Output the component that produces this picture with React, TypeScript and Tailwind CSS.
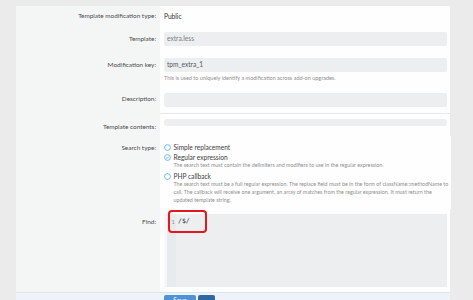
import type { ReactNode } from 'react'

// Admin form: edit template modification (regex search type)

const font = { fontFamily: 'Lato, "Noto Sans", sans-serif' }

function Row({
  label,
  labelPad,
  children,
  className = '',
}: {
  label?: string
  labelPad: string
  children: ReactNode
  className?: string
}) {
  return (
    <div className="flex">
      <div
        className={`w-[144px] shrink-0 bg-[#f4f5f5] pr-[4px] text-right text-[6.4px] leading-[10px] text-[#4b4b4b] ${labelPad}`}
      >
        {label}
      </div>
      <div className={`flex-1 bg-[#fefefe] pl-[4px] pr-[3px] ${className}`}>{children}</div>
    </div>
  )
}

function Radio({ checked }: { checked?: boolean }) {
  return (
    <svg width="7" height="7" viewBox="0 0 14 14" className="mr-[2.5px] shrink-0">
      <circle cx="7" cy="7" r="5.8" fill="#fff" stroke="#4aa3e6" strokeWidth="1.5" />
      {checked && (
        <path d="M4.2 7.2 L6.2 9.1 L9.9 5" fill="none" stroke="#4aa3e6" strokeWidth="1.5" />
      )}
    </svg>
  )
}

function Option({ label, checked, hint }: { label: string; checked?: boolean; hint?: string[] }) {
  return (
    <div className="mt-[3.5px] first:mt-0">
      <div className="flex items-center text-[6.6px] leading-[7px] text-[#3d3d3d]">
        <Radio checked={checked} />
        {label}
      </div>
      {hint && (
        <div className="pl-[9.5px] text-[5.35px] leading-[8.2px] whitespace-nowrap text-[#8e8e8e]">
          {hint.map((h) => (
            <div key={h}>{h}</div>
          ))}
        </div>
      )}
    </div>
  )
}

export default function App() {
  return (
    <div className="h-[300px] w-[473px] overflow-hidden bg-[#ebebeb] pl-[16px] pt-[6px]" style={font}>
      <div className="relative flex w-[434px] flex-col">
        <Row label="Template modification type:" labelPad="pt-[5px] pb-[6px]" className="pt-[5px]">
          <div className="text-[6.6px] leading-[10px] text-[#333]">Public</div>
        </Row>

        <Row label="Template:" labelPad="pt-[7px]" className="pt-[5px] pb-[3px]">
          <div className="flex h-[14px] items-center rounded-[2px] bg-[#eceef0] px-[3px] text-[6.6px] text-[#7d7d7d]">
            extra.less
          </div>
        </Row>

        <Row label="Modification key:" labelPad="pt-[11px]" className="pt-[9px] pb-[4px]">
          <div className="flex h-[14px] items-center rounded-[2px] bg-[#eceef0] px-[3px] text-[6.6px] text-[#555]">
            tpm_extra_1
          </div>
          <div className="mt-[2px] text-[5.5px] leading-[8px] text-[#8e8e8e]">
            This is used to uniquely identify a modification across add-on upgrades.
          </div>
        </Row>

        <Row label="Description:" labelPad="pt-[8px]" className="border-b border-[#e7e9ea] pt-[7px] pb-[6px]">
          <div className="h-[14px] rounded-[2px] bg-[#eceef0]" />
        </Row>

        <Row label="Template contents:" labelPad="pt-[8px] pb-[4px]" className="pt-[5px]">
          <div className="h-[7px] rounded-[3px] bg-[#eceef0]" />
        </Row>

        <Row label="Search type:" labelPad="pt-[6.5px]" className="pt-[7.8px] pb-[4px]">
          <Option label="Simple replacement" />
          <Option
            label="Regular expression"
            checked
            hint={['The search text must contain the delimiters and modifiers to use in the regular expression.']}
          />
          <Option
            label="PHP callback"
            hint={[
              'The search text must be a full regular expression. The replace field must be in the form of className::methodName to',
              'call. The callback will receive one argument, an array of matches from the regular expression. It must return the',
              'updated template string.',
            ]}
          />
        </Row>

        <Row label="Find:" labelPad="pt-[8px]" className="pt-[5.5px] pb-[5px]">
          <div className="relative flex h-[73px] bg-[#eceef0]">
            <div className="w-[12px] shrink-0 border-l-[3px] border-[#f6f7f8] bg-[#e8ebed] pt-[3px] pr-[1px] text-right text-[6.5px] leading-[9px] text-[#9a9a9a]">
              1
            </div>
            <div
              className="pl-[2px] pt-[3px] text-[6.5px] leading-[9px] text-[#333]"
              style={{ fontFamily: '"DejaVu Sans Mono", monospace' }}
            >
              /$/
            </div>
            <div className="absolute left-[4px] top-[-4px] h-[23px] w-[39px] rounded-[4px] border-2 border-[#e5161d]" />
          </div>
        </Row>

        <div className="flex h-[20px] gap-[2px] border-t border-[#dde5ec] bg-[#edf3f9] pl-[148px] pt-[2px]">
          <div className="h-[16px] w-[32px] rounded-[2px] bg-[#4f93d6] text-center text-[6.6px] leading-[10px] text-white">
            Save
          </div>
          <div className="h-[16px] w-[17px] rounded-[2px] bg-[#2f67a0]" />
        </div>
      </div>
    </div>
  )
}
